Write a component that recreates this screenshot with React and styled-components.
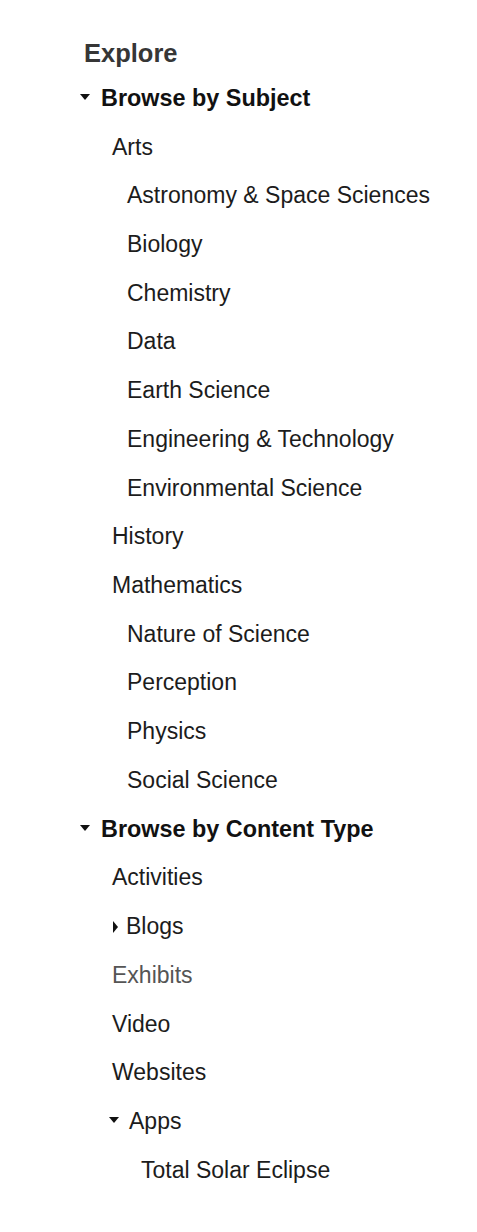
import React from 'react';
import styled, { createGlobalStyle } from 'styled-components';

const GlobalStyle = createGlobalStyle`
  body {
    margin: 0;
    background: #ffffff;
    font-family: 'Liberation Sans', Arial, sans-serif;
  }
`;

// tree of the explore menu; pad = left offset of the row, caret = open/closed arrow
const tree = [
  {
    label: 'Browse by Subject', section: true, caret: 'down',
    children: [
      { label: 'Arts', pad: 32 },
      { label: 'Astronomy & Space Sciences', pad: 47 },
      { label: 'Biology', pad: 47 },
      { label: 'Chemistry', pad: 47 },
      { label: 'Data', pad: 47 },
      { label: 'Earth Science', pad: 47 },
      { label: 'Engineering & Technology', pad: 47 },
      { label: 'Environmental Science', pad: 47 },
      { label: 'History', pad: 32 },
      { label: 'Mathematics', pad: 32 },
      { label: 'Nature of Science', pad: 47 },
      { label: 'Perception', pad: 47 },
      { label: 'Physics', pad: 47 },
      { label: 'Social Science', pad: 47 },
    ],
  },
  {
    label: 'Browse by Content Type', section: true, caret: 'down',
    children: [
      { label: 'Activities', pad: 32 },
      { label: 'Blogs', pad: 33, caret: 'right' },
      { label: 'Exhibits', pad: 32, muted: true },
      { label: 'Video', pad: 32 },
      { label: 'Websites', pad: 32 },
      { label: 'Apps', pad: 29, caret: 'down' },
      { label: 'Total Solar Eclipse', pad: 61 },
    ],
  },
];

const RenderRow = ({ item }) => (
  <Row pad={item.pad || 0}>
    {item.caret && <Caret dir={item.caret} section={item.section} />}
    <Label section={item.section} muted={item.muted}>{item.label}</Label>
  </Row>
);

const App = () => {
  return (
    <>
      <GlobalStyle />
      <Nav>
        <Title>Explore</Title>
        <List>
          {tree.map(section => (
            <li key={section.label}>
              <RenderRow item={section} />
              <List>
                {section.children.map(child => (
                  <li key={child.label}>
                    <RenderRow item={child} />
                  </li>
                ))}
              </List>
            </li>
          ))}
        </List>
      </Nav>
    </>
  );
};

export default App;

const Nav = styled.nav`
  padding: 37px 0 40px 80px;
`;

const Title = styled.h2`
  margin: 0 0 4px 4px;
  font-size: 25.5px;
  line-height: 33px;
  font-weight: 600;
  color: #363636;
`;

const List = styled.ul`
  list-style: none;
  margin: 0;
  padding: 0;
`;

const Row = styled.div`
  display: flex;
  align-items: center;
  height: 48.73px;
  padding-left: ${props => props.pad}px;
`;

const Caret = styled.span`
  flex: none;
  width: 0;
  height: 0;
  margin-right: ${props => (props.dir === 'right' ? 8 : props.section ? 11 : 10)}px;
  margin-top: ${props => (props.dir === 'right' ? 0 : -2)}px;
  ${props =>
    props.dir === 'right'
      ? `border-top: 6px solid transparent;
         border-bottom: 6px solid transparent;
         border-left: 5px solid #111;`
      : `border-left: 5px solid transparent;
         border-right: 5px solid transparent;
         border-top: 6px solid #111;`}
`;

const Label = styled.span`
  font-size: ${props => (props.section ? 23.4 : 23)}px;
  line-height: 33px;
  font-weight: ${props => (props.section ? 700 : 400)};
  color: ${props => (props.muted ? '#555555' : props.section ? '#111111' : '#1c1c1c')};
  white-space: nowrap;
`;
